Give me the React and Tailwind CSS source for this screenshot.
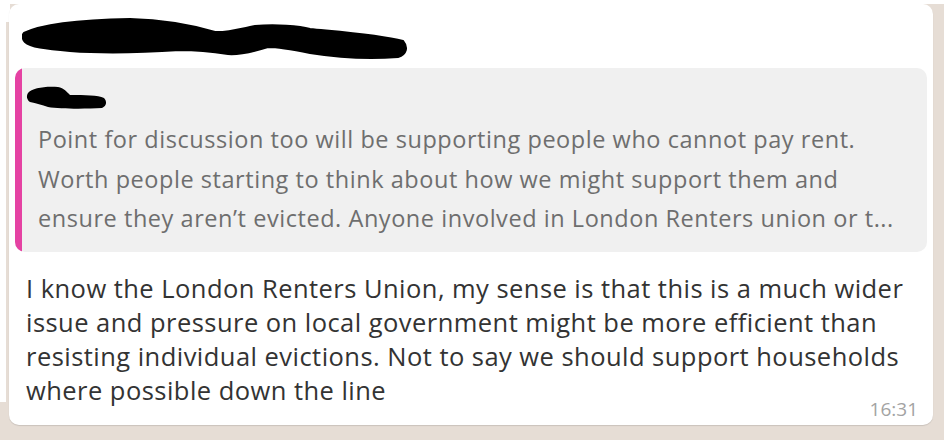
import React from "react";

export default function App() {
  const font = { fontFamily: '"Open Sans", "Noto Sans", sans-serif' };
  return (
    <div className="relative w-[944px] h-[440px] overflow-hidden bg-[#e6ddd5]" style={font}>
      {/* top white strip */}
      <div className="h-[4px] bg-white" />
      {/* tail of bubble */}
      <div className="absolute left-0 top-0 w-[10px] h-[22px] bg-white" />
      <div className="absolute left-0 top-[22px] w-[6px] h-[380px] bg-white" />
      <div className="ml-[9px] w-[924px] h-[421px] bg-white rounded-[10px] shadow-[0_1px_1px_rgba(0,0,0,0.12)] relative flex flex-col">
        <div className="h-[64px] relative">
          <svg className="absolute left-[13px] top-[14px]" width="390" height="46" viewBox="22 18 390 46">
            <path
              d="M24 33 C40 25 80 20 130 19 C165 20 195 26 215 32 C225 33 240 29 255 26 C275 24 300 26 310 29 C340 32 380 35 403 41 C408 47 407 54 398 57 C370 59 335 57 310 53 C295 50 280 47 268 47 C255 51 240 55 228 54 C215 52 200 50 180 50 C150 52 110 54 70 51 C45 49 30 47 25 42 C22 39 22 35 24 33 Z"
              fill="#000"
              stroke="#000"
              strokeWidth="2"
              strokeLinejoin="round"
            />
          </svg>
        </div>
        <div className="mx-[6px] h-[184px] rounded-[10px] overflow-hidden bg-[#f0f0f0] flex">
          <div className="w-[7px] bg-[#e542a3]" />
          <div className="flex-1 flex flex-col">
            <div className="h-[52px] relative">
              <svg className="absolute left-[4px] top-[18px]" width="82" height="24" viewBox="26 86 82 24">
                <path
                  d="M28 93 C32 88 45 86 58 87 C64 88 67 92 70 95 C85 95 98 95 104 98 C107 101 107 106 102 108 C85 109 60 109 48 107 C42 105 36 103 30 102 C27 100 26 96 28 93 Z"
                  fill="#000"
                />
              </svg>
            </div>
            <div className="pl-[16px] text-[23.5px] leading-[39.5px] tracking-[0.55px] text-[#6e6e6e] whitespace-nowrap">
              <div>Point for discussion too will be supporting people who cannot pay rent.</div>
              <div>Worth people starting to think about how we might support them and</div>
              <div>ensure they aren’t evicted. Anyone involved in London Renters union or t...</div>
            </div>
          </div>
        </div>
        <div className="mt-[19px] pl-[17px] text-[25.5px] leading-[34px] tracking-[0.46px] text-[#333333] whitespace-nowrap">
          <div>I know the London Renters Union, my sense is that this is a much wider</div>
          <div>issue and pressure on local government might be more efficient than</div>
          <div>resisting individual evictions. Not to say we should support households</div>
          <div>where possible down the line</div>
        </div>
        <div className="absolute right-[15px] bottom-[6px] text-[19px] leading-[20px] text-[#a3a3a3]">16:31</div>
      </div>
    </div>
  );
}
